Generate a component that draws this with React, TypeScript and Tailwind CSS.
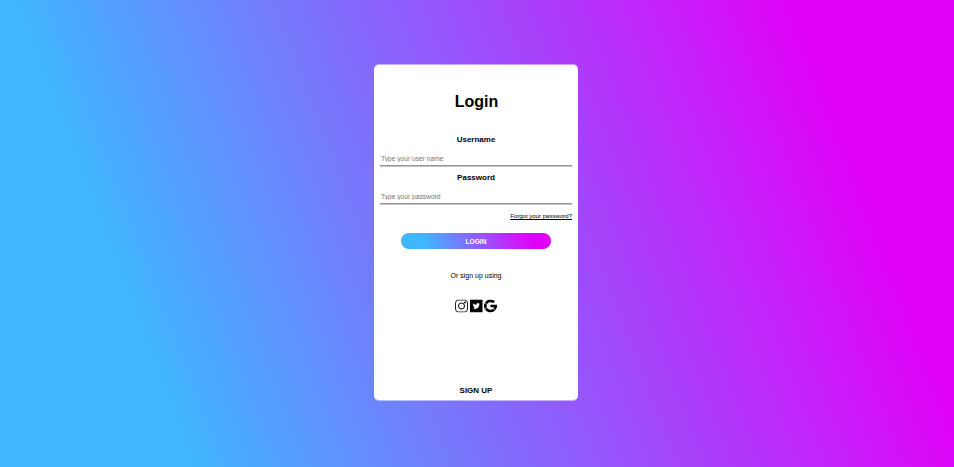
import React from "react";

const gradient = "bg-[linear-gradient(69deg,#3fb7ff_16.5%,#e200f8_86.7%)]";

function Field({ label, type, placeholder }: { label: string; type: string; placeholder: string }) {
  return (
    <label className="block h-[38px] text-center">
      <span className="block h-[17px] text-[8px] leading-[10px] font-bold">{label}</span>
      <span className="block border-b border-[#c4c4c4]">
        <input
          type={type}
          placeholder={placeholder}
          className="block h-[14px] w-full border-b border-[#969696] bg-transparent px-px pb-px text-[6.67px] leading-[12px] outline-none placeholder:text-[#757575]"
        />
      </span>
    </label>
  );
}

function Instagram() {
  return (
    <svg viewBox="0 0 26 26" className="size-[13px]" fill="none" stroke="#000">
      <rect x="1" y="1" width="24" height="24" rx="6" strokeWidth="1.7" />
      <circle cx="13" cy="13" r="6" strokeWidth="2" />
      <circle cx="20" cy="6" r="1.8" fill="#000" stroke="none" />
    </svg>
  );
}

function Twitter() {
  return (
    <svg viewBox="0 0 26 26" className="size-[13px]">
      <path d="M0 0h25v26H0z" />
      <path
        fill="#fff"
        transform="translate(5.5 5.8) scale(.6)"
        d="M23.95 4.57a10 10 0 0 1-2.82.77 4.96 4.96 0 0 0 2.16-2.72c-.95.55-2 .95-3.13 1.18a4.92 4.92 0 0 0-8.38 4.48C7.69 8.1 4.07 6.13 1.64 3.16a4.92 4.92 0 0 0 1.52 6.57 4.9 4.9 0 0 1-2.23-.61v.06a4.92 4.92 0 0 0 3.95 4.83 5 5 0 0 1-2.21.08 4.94 4.94 0 0 0 4.6 3.42A9.87 9.87 0 0 1 0 19.54a14 14 0 0 0 7.55 2.21c9.05 0 14-7.5 14-13.98l-.02-.64a10 10 0 0 0 2.42-2.56z"
      />
    </svg>
  );
}

function Google() {
  return (
    <svg viewBox="0 0 26 26" className="size-[13px]" fill="none" stroke="#000">
      <path d="M20.2 5.5A10.3 10.3 0 1 0 23.3 13" strokeWidth="5.4" />
      <path d="M13 13h13" strokeWidth="5" />
      <path d="M1 6.8l7 4.5M1 19.2l7-4.5M18 17.5l4.5 4" stroke="#fff" strokeWidth="1.2" />
    </svg>
  );
}

export default function App() {
  return (
    <main
      className={`${gradient} flex h-[467px] w-full flex-col items-center pr-[2px] pt-[65px] font-['Liberation_Sans',Arial,sans-serif] text-black`}
    >
      <section className="flex h-[335px] w-[204px] flex-col rounded-[5px] bg-white px-[6px] shadow-[0_-1px_0_rgba(255,255,255,0.5),0_1px_0_rgba(255,255,255,0.5)]">
        <h1 className="mt-[27px] h-[43px] pl-px text-center text-[16px] leading-[20px] font-bold">Login</h1>
        <Field label="Username" type="text" placeholder="Type your user name" />
        <Field label="Password" type="password" placeholder="Type your password" />
        <a href="#" className="mt-px block text-right text-[6.05px] leading-[8px] underline">
          Forgot your password?
        </a>
        <button
          type="button"
          className={`${gradient} mx-auto mt-[13px] h-[16px] w-[150px] rounded-full pt-px text-[6.67px] leading-[15px] font-bold text-white`}
        >
          LOGIN
        </button>
        <p className="mt-[22px] text-center text-[7px] leading-[10px]">Or sign up using</p>
        <div className="mt-[18px] flex translate-y-[0.5px] justify-center gap-[1.7px]">
          <Instagram />
          <Twitter />
          <Google />
        </div>
        <a href="#" className="mt-auto mb-[4px] text-center text-[8px] leading-[10px] font-bold">
          SIGN UP
        </a>
      </section>
    </main>
  );
}
